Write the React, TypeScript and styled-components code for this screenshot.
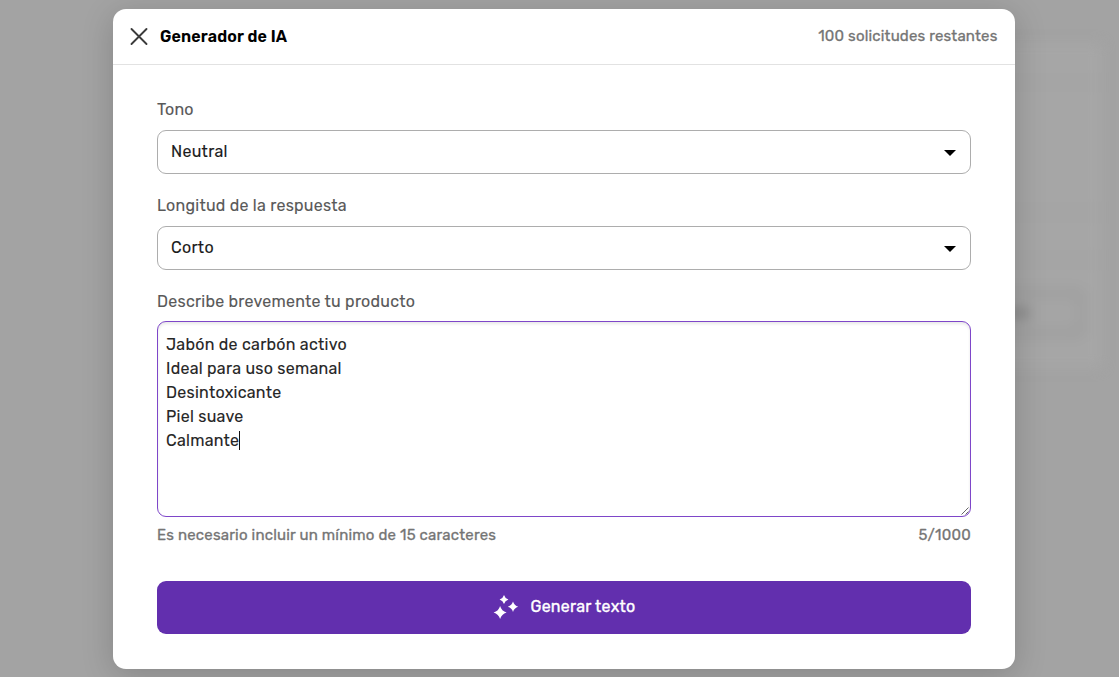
import React from "react";
import styled, { createGlobalStyle } from "styled-components";

const GlobalStyle = createGlobalStyle`
  * { box-sizing: border-box; }
  body {
    margin: 0;
    background: #a3a3a3;
    font-family: Rubik, Roboto, "Liberation Sans", sans-serif;
    font-size: 16px;
    overflow: hidden;
  }
`;

const Screen = styled.div`
  position: relative;
  height: 677px;
  padding: 9px 104px 8px 113px;
  overflow: hidden;
`;

const Backdrop = styled.div`
  position: absolute;
  inset: 0;
  filter: blur(6px);
`;

const Panel = styled.div<{ $x: number; $y: number; $w: number; $h: number; $color: string; $radius?: number }>`
  position: absolute;
  left: ${(p) => p.$x}px;
  top: ${(p) => p.$y}px;
  width: ${(p) => p.$w}px;
  height: ${(p) => p.$h}px;
  background: ${(p) => p.$color};
  border-radius: ${(p) => p.$radius ?? 4}px;
`;

const Dialog = styled.section`
  position: relative;
  display: flex;
  flex-direction: column;
  height: 660px;
  background: #fff;
  border-radius: 13px;
  box-shadow: 0 6px 32px rgba(0, 0, 0, 0.18);
`;

const Header = styled.header`
  display: flex;
  align-items: center;
  height: 56px;
  padding: 0 17.5px 0 18px;
  border-bottom: 1px solid #e2e2e2;
`;

const CloseButton = styled.button`
  display: flex;
  padding: 0;
  border: 0;
  background: none;
  margin-right: 13px;
`;

const Text = styled.span<{ $color: string; $spacing?: number; $weight?: number; $size?: number; $stroke?: number }>`
  color: ${(p) => p.$color};
  font-size: ${(p) => p.$size ?? 16}px;
  font-weight: ${(p) => p.$weight ?? 400};
  letter-spacing: ${(p) => p.$spacing ?? 0}px;
  -webkit-text-stroke: ${(p) => p.$stroke ?? 0}px currentColor;
  line-height: 24px;
  white-space: nowrap;
`;

const Remaining = styled(Text)`
  margin-left: auto;
  padding-bottom: 2px;
`;

const Form = styled.div`
  display: flex;
  flex-direction: column;
  padding: 33px 44px 0;
`;

const Label = styled(Text)`
  display: block;
  margin-bottom: 8px;
`;

const Select = styled.div`
  display: flex;
  align-items: center;
  justify-content: space-between;
  height: 44px;
  margin-bottom: 20px;
  padding: 0 14px 1px 13px;
  border: 1px solid #adadad;
  border-radius: 9px;
`;

const Caret = styled.i`
  margin-top: 3px;
  border-left: 6px solid transparent;
  border-right: 6px solid transparent;
  border-top: 6px solid #000;
`;

const Description = styled.div`
  position: relative;
  display: flex;
  flex-direction: column;
  height: 196px;
  margin-top: -1px;
  padding: 11px 8px;
  border: 1px solid #7e46c9;
  border-radius: 9px;
  box-shadow: inset 0 2px 3px rgba(0, 0, 0, 0.09);
`;

const Cursor = styled.span`
  display: inline-block;
  width: 1px;
  height: 19px;
  margin-right: -1px;
  background: #111;
  vertical-align: -4px;
`;

const Grip = styled.svg`
  position: absolute;
  right: 0;
  bottom: 0;
`;

const Hint = styled.div`
  display: flex;
  justify-content: space-between;
  margin-top: 6px;
`;

const Generate = styled.button`
  display: flex;
  align-items: center;
  justify-content: center;
  gap: 12px;
  height: 53px;
  margin-top: 34px;
  padding: 0 0 2px;
  border: 0;
  border-radius: 9px;
  background: #622fae;
  font-family: inherit;
`;

const lines = [
  "Jabón de carbón activo",
  "Ideal para uso semanal",
  "Desintoxicante",
  "Piel suave",
  "Calmante",
];

export default function App() {
  return (
    <>
      <GlobalStyle />
      <Screen>
        <Backdrop>
          <Panel $x={980} $y={43} $w={122} $h={325} $color="#a5a5a5" />
          <Panel $x={980} $y={44} $w={122} $h={29} $color="#a6a6a6" />
          <Panel $x={980} $y={92} $w={122} $h={110} $color="#a6a6a6" />
          <Panel $x={980} $y={223} $w={122} $h={27} $color="#a6a6a6" />
          <Panel $x={980} $y={270} $w={122} $h={96} $color="#a6a6a6" />
          <Panel $x={980} $y={286} $w={107} $h={54} $color="#a1a1a1" $radius={10} />
          <Panel $x={980} $y={299} $w={96} $h={28} $color="#a5a5a5" $radius={8} />
          <Panel $x={1000} $y={307} $w={30} $h={12} $color="#8d8d8d" />
        </Backdrop>
        <Dialog>
          <Header>
            <CloseButton aria-label="Cerrar">
              <svg width="16" height="18" viewBox="0 0 16 18" fill="none" stroke="#3b3b3b" strokeWidth="1.9" strokeLinecap="round" overflow="visible">
                <path d="M.5 1 15.5 16M15.5 1 .5 16" />
              </svg>
            </CloseButton>
            <Text as="h1" $color="#000" $weight={600} $spacing={0.14}>Generador de IA</Text>
            <Remaining $color="#757575" $stroke={0.3} $size={15} $spacing={0.18}>100 solicitudes restantes</Remaining>
          </Header>
          <Form>
            <Label $color="#595959" $stroke={0.1} $spacing={0.25}>Tono</Label>
            <Select>
              <Text $color="#1c1c1c" $stroke={0.1} $spacing={0.3}>Neutral</Text>
              <Caret />
            </Select>
            <Label $color="#595959" $stroke={0.1} $spacing={0.25}>Longitud de la respuesta</Label>
            <Select>
              <Text $color="#1c1c1c" $stroke={0.1} $spacing={0.3}>Corto</Text>
              <Caret />
            </Select>
            <Label $color="#595959" $stroke={0.1} $spacing={0.25}>Describe brevemente tu producto</Label>
            <Description>
              {lines.map((line, i) => (
                <Text key={line} $color="#262626" $stroke={0.1} $spacing={0.26}>
                  {line}
                  {i === lines.length - 1 && <Cursor />}
                </Text>
              ))}
              <Grip width="10" height="10" viewBox="0 0 10 10" stroke="#555" strokeWidth="0.9" fill="none">
                <path d="M1.5 8.5 8.5 1.5M5.5 8.5 8.5 5.5" />
              </Grip>
            </Description>
            <Hint>
              <Text $color="#757575" $stroke={0.3} $size={15} $spacing={0.19}>Es necesario incluir un mínimo de 15 caracteres</Text>
              <Text $color="#757575" $stroke={0.3} $size={15} $spacing={0.25}>5/1000</Text>
            </Hint>
            <Generate>
              <svg width="26" height="26" viewBox="0 0 26 26" fill="#fff">
                <path d="M11 1q1 3.5 4.4 4.5-3.4 1-4.4 4.5-1-3.5-4.4-4.5 3.4-1 4.4-4.5zM20 7.5q1.2 4 5.2 5.2-4 1.2-5.2 5.2-1.2-4-5.2-5.2 4-1.2 5.2-5.2zM7.1 12q1.5 5 6.5 6.5-5 1.5-6.5 6.5-1.5-5-6.5-6.5 5-1.5 6.5-6.5z" />
              </svg>
              <Text $color="#fff" $stroke={0.35} $spacing={0.25}>Generar texto</Text>
            </Generate>
          </Form>
        </Dialog>
      </Screen>
    </>
  );
}
